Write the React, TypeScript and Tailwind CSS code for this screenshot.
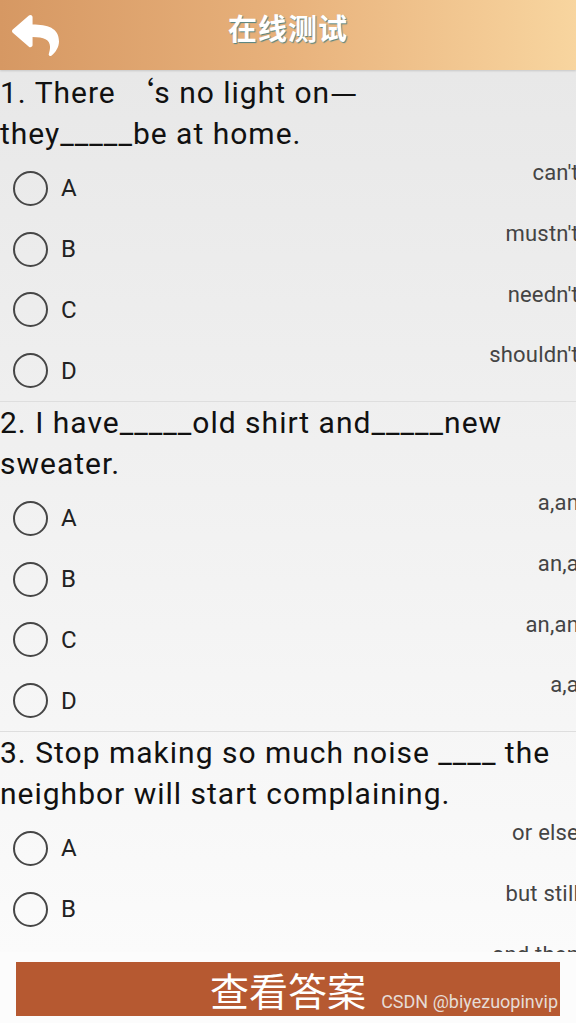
import { FaReply } from "react-icons/fa";

const questions = [
  {
    title: "1. There \u2018s no light on\u2014\nthey_____be at home.",
    options: ["can't", "mustn't", "needn't", "shouldn't"],
  },
  {
    title: "2. I have_____old shirt and_____new sweater.",
    options: ["a,an", "an,a", "an,an", "a,a"],
  },
  {
    title: "3. Stop making so much noise ____ the neighbor will start complaining.",
    options: ["or else", "but still", "and then", "but"],
  },
];

const letters = ["A", "B", "C", "D"];

// full-width punctuation comes from the CJK font, as on the device
function Title({ text }: { text: string }) {
  const parts = text.split(/([\u2018\u2014])/);
  return (
    <p className="whitespace-pre-line pb-[4px] text-[30px] leading-[41px] tracking-[1px] text-[#111]">
      {parts.map((p, i) =>
        p === "\u2018" || p === "\u2014" ? (
          <span key={i} className="tracking-normal [font-family:'Noto_Sans_CJK_SC',sans-serif]">
            {p}
          </span>
        ) : (
          <span key={i}>{p}</span>
        )
      )}
    </p>
  );
}

function OptionRow({ letter, text }: { letter: string; text: string }) {
  return (
    <div className="flex h-[60.75px] justify-between">
      <div className="flex items-center">
        <span className="ml-[13px] h-[35px] w-[35px] rounded-full border-[2.5px] border-[#464646]" />
        <span className="ml-[13px] text-[24px] tracking-[0.5px] text-[#222]">{letter}</span>
      </div>
      <span className="-mr-[3px] pt-[2px] text-[22px] leading-[26px] tracking-[0.2px] text-[#444]">
        {text}
      </span>
    </div>
  );
}

export default function App() {
  return (
    <div
      className="flex h-[1023px] w-[576px] flex-col overflow-hidden bg-[#fcfcfc]"
      style={{ fontFamily: "Roboto, 'Noto Sans CJK SC', sans-serif" }}
    >
      {/* header */}
      <div className="relative flex h-[70px] shrink-0 items-center justify-center bg-linear-to-r from-[#d69863] via-[#e8b27c] to-[#f8d59f] pb-[14px] shadow-[0_1px_2px_rgba(0,0,0,0.15)]">
        <FaReply className="absolute left-[12px] top-[12px] text-white" size={47} />
        <span className="text-[29px] font-bold tracking-[1px] text-white [font-family:'Noto_Sans_CJK_SC',sans-serif] [text-shadow:1px_1px_1px_#4f8383]">
          在线测试
        </span>
      </div>

      {/* question list */}
      <div className="flex-1 overflow-hidden bg-linear-to-b from-[#e8e8e8] to-[#fbfbfb]">
        {questions.map((q) => (
          <div key={q.title} className="border-b border-[#dedede]">
            <Title text={q.title} />
            {q.options.map((opt, i) => (
              <OptionRow key={opt} letter={letters[i]} text={opt} />
            ))}
          </div>
        ))}
      </div>

      {/* footer */}
      <div className="h-[71px] shrink-0 px-[16px] pt-[10px]">
        <div className="relative flex h-[54px] items-center justify-center bg-[#b65931]">
          <span className="text-[39px] leading-none text-white [font-family:'Noto_Sans_CJK_SC',sans-serif]">
            查看答案
          </span>
          <span className="absolute bottom-[5px] right-[2px] text-[18px] leading-none text-[#e6dcd6]">
            CSDN @biyezuopinvip
          </span>
        </div>
      </div>
    </div>
  );
}
